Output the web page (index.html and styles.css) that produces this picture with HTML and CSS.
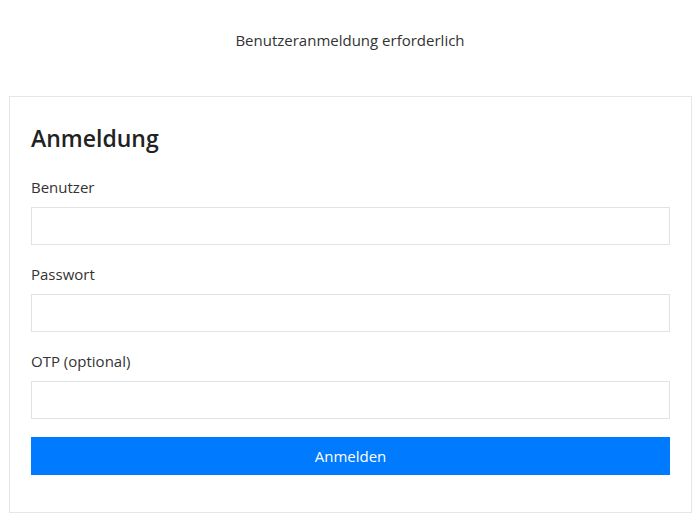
FILE: index.html
```html
<!DOCTYPE html>
<html lang="de">
<head>
<meta charset="utf-8">
<title>Anmeldung</title>
<link rel="stylesheet" href="styles.css">
</head>
<body>
<header class="top">Benutzeranmeldung erforderlich</header>
<main class="card">
  <h1 class="title">Anmeldung</h1>
  <form class="form">
    <label class="label" for="user">Benutzer</label>
    <input class="input" id="user" type="text">
    <label class="label" for="pass">Passwort</label>
    <input class="input" id="pass" type="password">
    <label class="label" for="otp">OTP (optional)</label>
    <input class="input" id="otp" type="text">
    <button class="btn" type="button">Anmelden</button>
  </form>
</main>
</body>
</html>
```
FILE: styles.css
```css
* { box-sizing: border-box; }
html, body { margin: 0; background: #fff; }
body {
  font-family: "Open Sans", "Noto Sans", sans-serif;
  font-size: 15px;
  color: #333;
  padding: 0 9px;
}
.top {
  text-align: center;
  line-height: 20px;
  padding-top: 30px;
  height: 96px;
  color: #333;
}
.card {
  border: 1px solid #e6e6e6;
  padding: 27px 21px 37px 21px;
  width: 683px;
}
.title {
  margin: 0;
  font-size: 23px;
  line-height: 29px;
  font-weight: 600;
  color: #222;
}
.form {
  display: flex;
  flex-direction: column;
  margin-top: 24px;
}
.label {
  line-height: 20px;
  font-size: 15px;
  color: #333;
  margin-bottom: 10px;
}
.input {
  height: 38px;
  border: 1px solid #dfe3e8;
  background: #fff;
  margin: 0 0 19px 0;
  padding: 0 8px;
  font: inherit;
}
.input:last-of-type { margin-bottom: 18px; }
.btn {
  height: 38px;
  border: 0;
  background: #007bff;
  color: #fff;
  font: inherit;
  font-size: 15px;
}
```
